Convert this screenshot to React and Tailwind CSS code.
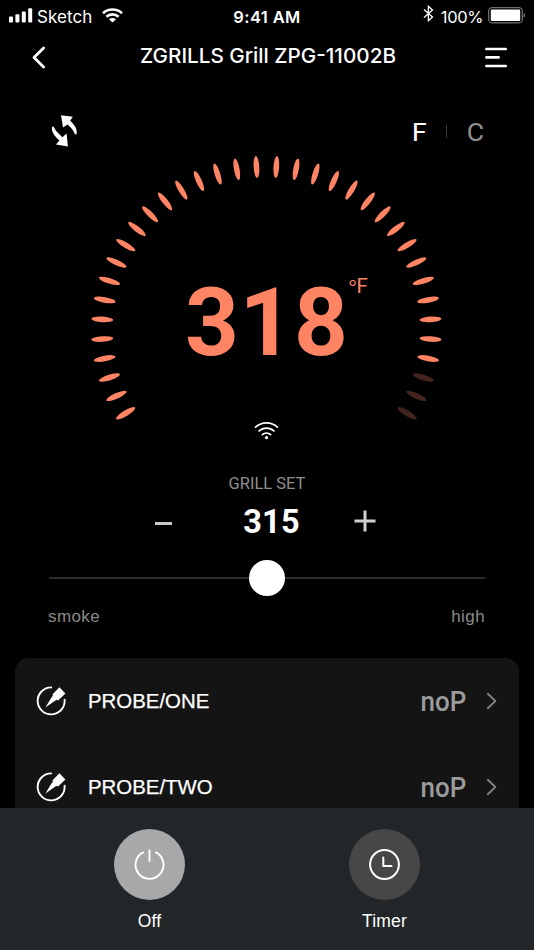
import React from "react";

const TICK_COUNT = 36;
const LIT_TICKS = 33;
const STEP = 90 / 13;

const ticks = Array.from({ length: TICK_COUNT }, (_, i) => {
  const angle = (i - (TICK_COUNT - 1) / 2) * STEP;
  const rad = (angle * Math.PI) / 180;
  return {
    angle,
    x: 266.4 + 164.4 * Math.sin(rad),
    y: 247.2 - 162.5 * Math.cos(rad),
    lit: i < LIT_TICKS,
  };
});

function StatusBar() {
  return (
    <div className="grid h-8 grid-cols-3 items-center text-[17px] leading-8">
      <div className="flex items-center pl-[9px]">
        <svg className="-mt-[2px]" width="24" height="15" viewBox="0 0 24 15" fill="#fff">
          <rect x="0" y="8.5" width="4" height="6" rx="1" />
          <rect x="6.4" y="6.3" width="4" height="8.2" rx="1" />
          <rect x="12.8" y="3.6" width="4" height="10.9" rx="1" />
          <rect x="19.2" y="0.3" width="4" height="14.2" rx="1" />
        </svg>
        <span className="ml-[4px] tracking-[0.1px]">Sketch</span>
        <svg className="-mt-[3px] ml-[9px]" width="21" height="15" viewBox="0 0 21 15" fill="none" stroke="#fff" strokeWidth="2.6">
          <path d="M1 5.2C6.3 0.3 14.7 0.3 20 5.2" />
          <path d="M4.4 8.8C7.9 5.6 13.1 5.6 16.6 8.8" />
          <path d="M7 11.2C9 9.6 12 9.6 14 11.2L10.5 14.6Z" fill="#fff" stroke="none" />
        </svg>
      </div>
      <div className="mt-px text-center text-[16.5px] font-semibold tracking-[0.4px]">9:41 AM</div>
      <div className="flex items-center justify-end pr-[8px]">
        <svg className="-mt-[6px]" width="11" height="17" viewBox="0 0 11 17" fill="none" stroke="#fff" strokeWidth="1.3">
          <path d="M1 4.5L9.5 12L5.4 15.7V1.3L9.5 5L1 12.5" />
        </svg>
        <span className="ml-[7px] text-[16.5px] tracking-[-0.4px]">100%</span>
        <svg className="-mt-[2px] ml-[5px]" width="38" height="17" viewBox="0 0 38 17">
          <rect x="0.7" y="0.7" width="33.6" height="15.2" rx="3.5" fill="none" stroke="#707070" strokeWidth="1.3" />
          <rect x="2.8" y="2.6" width="29.4" height="11.4" rx="1.2" fill="#fff" />
          <path d="M35.6 6C37.6 6.6 37.6 10.2 35.6 10.8Z" fill="#707070" />
        </svg>
      </div>
    </div>
  );
}

function Header() {
  return (
    <div className="flex h-[50px] items-center justify-between pr-[26px] pl-[31px]">
      <svg width="16" height="24" viewBox="0 0 16 24" fill="none" stroke="#fff" strokeWidth="2.8" strokeLinecap="round" strokeLinejoin="round">
        <path d="M12.6 3L3 12.5L12.6 22" />
      </svg>
      <h1 className="-mt-[3px] ml-[4px] text-[20.7px] leading-8 font-medium">ZGRILLS Grill ZPG-11002B</h1>
      <svg className="mt-[2px]" width="23" height="22" viewBox="0 0 23 22" fill="none" stroke="#fff" strokeWidth="2.7" strokeLinecap="round">
        <path d="M1.4 2H20.7M1.4 10.4H13.6M1.4 19H20.7" />
      </svg>
    </div>
  );
}

function Dial() {
  return (
    <section className="grid h-[376px] grid-cols-1 grid-rows-1">
      <svg className="col-start-1 row-start-1" width="534" height="376" viewBox="0 0 534 376">
        {ticks.map((t) => (
          <ellipse
            key={t.angle}
            cx={t.x}
            cy={t.y}
            rx="2.8"
            ry="11"
            fill={t.lit ? "#ff8464" : "#43231d"}
            transform={`rotate(${t.angle} ${t.x} ${t.y})`}
          />
        ))}
      </svg>
      <div className="col-start-1 row-start-1 flex flex-col">
        <div className="flex h-[66px] items-center justify-between pt-[32px] pr-[50px] pl-[51px]">
          <svg width="27" height="34" viewBox="0 0 27 34" fill="#fff">
            <path d="M10 1.2L21.8 2.8L19.2 6.8C23.6 11 26.6 15 25.6 20.3L23.8 20.3C23.4 17.4 20.8 14.4 16.6 10.4L12 13.4Z" />
            <path d="M16.9 32.6L5 30.6L8.4 26.6C4 22.4 0.2 18 1 12.9L2.6 12.6C3.6 16.2 7.2 19.2 11.4 23.2L15.6 19.4Z" />
          </svg>
          <div className="flex items-center font-['Roboto',sans-serif] text-[26.5px] leading-[34px]">
            <span className="mt-px text-white [-webkit-text-stroke:0.2px_#fff]">F</span>
            <span className="mr-[20px] ml-[19px] h-[13px] w-px bg-[#3a3a3a]" />
            <span className="mt-px text-[#8f8f8f]">C</span>
          </div>
        </div>
        <div className="mt-[119px] flex h-[110px] items-start pl-[185px] font-['Roboto',sans-serif] text-[#ff8464]">
          <span className="mt-[10px] text-[94px] leading-[92px] font-bold tracking-[0.6px]">318</span>
          <span className="mt-[4px] flex text-[20.5px] leading-[30px]">
            <span className="w-[8px] font-['Noto_Sans_CJK_SC',sans-serif] text-[22px] leading-[32px]">°</span>
            <span>F</span>
          </span>
        </div>
        <svg className="mt-[44px] ml-[254px]" width="25" height="19" viewBox="0 0 25 19" fill="none" stroke="#fff" strokeWidth="1.7" strokeLinecap="round">
          <path d="M1.6 6.2C7.8 0.4 17.2 0.4 23.4 6.2" />
          <path d="M5 10C9.2 6.1 15.8 6.1 20 10" />
          <path d="M8.4 13.6C10.8 11.5 14.2 11.5 16.6 13.6" />
          <circle cx="12.5" cy="16.6" r="1.6" fill="#fff" stroke="none" />
        </svg>
      </div>
    </section>
  );
}

function GrillSet() {
  return (
    <section className="flex h-[200px] flex-col px-[49px] pt-[14px]">
      <div className="text-center font-['Roboto',sans-serif] text-[16.5px] leading-[23px] text-[#8f8f8f]">GRILL SET</div>
      <div className="flex h-[50px] items-center justify-between pr-[109px] pl-[106px]">
        <span className="mt-[6px] h-[3px] w-[17px] bg-[#c8c8c8]" />
        <span className="mt-[3px] ml-[17px] font-['Roboto',sans-serif] text-[32.5px] leading-[46px] font-bold tracking-[0.2px]">315</span>
        <svg className="mt-[2px]" width="22" height="22" viewBox="0 0 22 22" stroke="#d0d0d0" strokeWidth="3">
          <path d="M0.5 11H21.5M11 0.5V21.5" />
        </svg>
      </div>
      <div className="mt-[15px] flex h-[36px] items-center">
        <span className="h-[2px] flex-1 bg-[#2b2b2b]" />
        <span className="size-9 rounded-full bg-white" />
        <span className="h-[2px] flex-1 bg-[#2b2b2b]" />
      </div>
      <div className="mt-[9px] -ml-px flex justify-between font-['Liberation_Sans',sans-serif] text-[17px] leading-6 tracking-[0.4px] text-[#8a8a8a]">
        <span>smoke</span>
        <span>high</span>
      </div>
    </section>
  );
}

function ProbeRow({ name }) {
  return (
    <div className="flex h-[86px] items-center pr-[21px] pl-[21px]">
      <svg width="32" height="32" viewBox="0 0 32 32" fill="none">
        <path d="M15.2 2.4A13.5 13.5 0 1 0 28.6 14.6" stroke="#fff" strokeWidth="1.9" strokeLinecap="round" />
        <path d="M9.4 22.6L15.6 12.2L17 10.8L16.4 9.6L23.4 2.2L29.4 8.4L22 15.4L20.6 14.8L19.4 15.6Z" fill="#fff" />
      </svg>
      <span className="-mt-px ml-[20px] flex-1 font-['Liberation_Sans',sans-serif] text-[20.4px] leading-7 [-webkit-text-stroke:0.25px_#fff]">{name}</span>
      <span className="mt-px origin-right scale-x-[0.91] font-['Roboto',sans-serif] text-[28.5px] leading-8 font-medium text-[#9b9b9b]">noP</span>
      <svg className="ml-[20px]" width="12" height="18" viewBox="0 0 12 18" fill="none" stroke="#808080" strokeWidth="1.9" strokeLinecap="round" strokeLinejoin="round">
        <path d="M1.8 1.8L9.4 9L1.8 16.2" />
      </svg>
    </div>
  );
}

function ActionButton({ label, circle, children }) {
  return (
    <div className="flex w-[71px] flex-col items-center">
      <div className={`flex size-[71px] items-center justify-center rounded-full ${circle}`}>{children}</div>
      <span className="mt-[9px] font-['Liberation_Sans',sans-serif] text-[17.5px] leading-6 tracking-[0.2px]">{label}</span>
    </div>
  );
}

export default function App() {
  return (
    <div className="flex h-[950px] w-[534px] flex-col overflow-hidden bg-black font-['Inter',sans-serif] text-white">
      <StatusBar />
      <Header />
      <Dial />
      <GrillSet />
      <section className="mx-[15px] h-[150px] overflow-hidden rounded-t-[14px] bg-[#141414]">
        <ProbeRow name="PROBE/ONE" />
        <ProbeRow name="PROBE/TWO" />
      </section>
      <nav className="flex h-[142px] justify-between bg-[#232629] px-[114px] pt-[21px]">
        <ActionButton label="Off" circle="bg-[#a6a8aa]">
          <svg width="31" height="31" viewBox="0.5 0.5 31 31" fill="none" stroke="#fff" strokeWidth="1.9" strokeLinecap="round">
            <path d="M9.6 3.9A14 14 0 1 0 22.4 3.9M16 2V12.6" />
          </svg>
        </ActionButton>
        <ActionButton label="Timer" circle="bg-[#474748]">
          <svg width="31" height="31" viewBox="0.5 0.5 31 31" fill="none" stroke="#fff" strokeWidth="2" strokeLinecap="round" strokeLinejoin="round">
            <circle cx="16" cy="16" r="14.4" />
            <path d="M14.8 9V17.4H23" />
          </svg>
        </ActionButton>
      </nav>
    </div>
  );
}
